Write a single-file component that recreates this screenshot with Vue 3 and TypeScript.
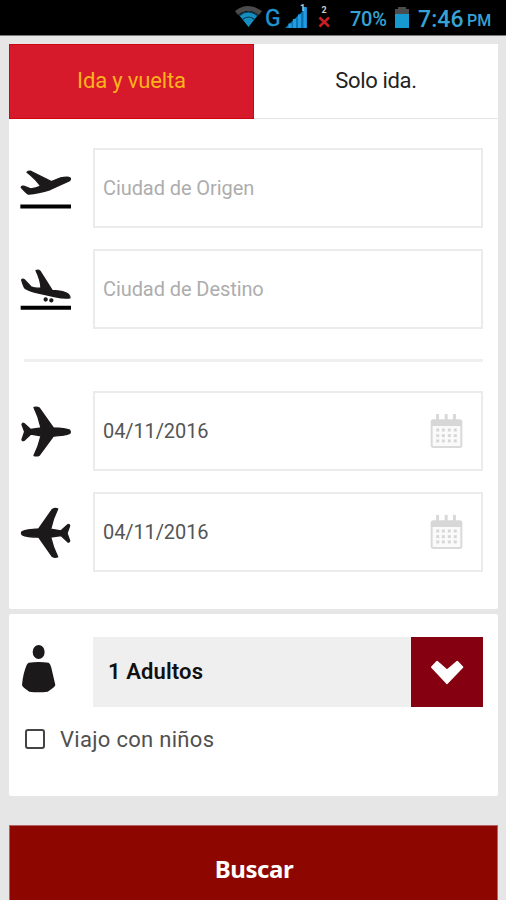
<script setup lang="ts">
import { ref } from 'vue'

interface Field {
  kind: 'takeoff' | 'landing' | 'depart' | 'return'
  text: string
}

const places: Field[] = [
  { kind: 'takeoff', text: 'Ciudad de Origen' },
  { kind: 'landing', text: 'Ciudad de Destino' },
]
const dates: Field[] = [
  { kind: 'depart', text: '04/11/2016' },
  { kind: 'return', text: '04/11/2016' },
]
const roundTrip = ref(true)
const children = ref(false)
const dots = [110, 127, 145, 163]
const dotRows = [130, 147, 163]
</script>

<template>
  <div class="screen">
    <header class="status">
      <svg class="signals" viewBox="0 0 104 36" aria-hidden="true">
        <path d="M1 11Q14 1 28 11L25 15Q14 7 4 15Z" fill="#4b4b4b" />
        <path d="M5 15Q14 8 24 15L14.500 27Z" fill="#168fc0" />
        <path d="M5.500 15.500Q14.500 8.500 23.500 15.500M8.500 19.500Q14.500 14.500 20.500 19.500" fill="none" stroke="#07334a" stroke-width="1.200" />
        <text x="31" y="25.500" class="network">G</text>
        <path d="M51 28L73 7V28Z" fill="#0872ae" />
        <path d="M56 28V23.500M60.500 28V19M65.500 28V14.500M71 28V7" stroke="#249be0" stroke-width="3.200" />
        <text x="66" y="11" class="sim">1</text>
        <text x="87.500" y="12.500" class="sim">2</text>
        <path d="M85.500 17.500L95 26.500M95 17.500L85.500 26.500" stroke="#c81f27" stroke-width="2.500" />
      </svg>
      <span class="percent">70%</span>
      <svg class="battery" viewBox="0 0 16 22" aria-hidden="true">
        <path d="M4 0H12V2H15V8H1V2H4Z" fill="#4c4c4c" />
        <path d="M1 7H15V21H1Z" fill="#1599cf" />
      </svg>
      <span class="clock">7:46</span>
      <span class="meridiem">PM</span>
    </header>

    <main>
      <section class="card trip">
        <nav class="tabs">
          <button :class="['tab', { active: roundTrip }]" @click="roundTrip = true"><span class="label-round">Ida y vuelta</span></button>
          <button :class="['tab', { active: !roundTrip }]" @click="roundTrip = false"><span class="label-one">Solo ida.</span></button>
        </nav>

        <div class="group">
          <div v-for="f in places" :key="f.kind" class="row">
            <svg v-if="f.kind === 'takeoff'" class="icon plane" viewBox="60 67.5 156 150">
              <path d="M81 95Q86 91 94 93L154 123L182 112Q205 107 211 113Q213 118 204 123L151 147Q115 158 86 161Q80 159 64 141Q64 136 71 137L92 145Q108 144 122 137Q108 116 81 95Z" />
              <path class="ground" d="M61 192H213V204H61Z" />
            </svg>
            <svg v-else class="icon plane" viewBox="60 70.5 156 150">
              <path d="M108 90Q115 87 120 92L157 150Q194 152 205 161Q211 168 210 172Q193 175 163 168L116 158Q87 152 76 144Q71 140 65 118Q68 114 73 118L93 139Q108 145 123 142Q122 119 108 90Z" />
              <circle cx="137" cy="177" r="4.500" /><circle cx="154" cy="179.500" r="4.500" />
              <path class="ground" d="M62 196H213V208H62Z" />
            </svg>
            <div class="field placeholder"><span :class="f.kind">{{ f.text }}</span></div>
          </div>
        </div>

        <div class="divider"></div>

        <div class="group">
          <div v-for="f in dates" :key="f.kind" class="row">
            <svg v-if="f.kind === 'depart'" class="icon plane" viewBox="60 61.5 156 150">
              <path d="M102 66Q111 63 118 68L160 127Q196 128 209 134Q213 139 209 144Q196 150 160 152L118 209Q111 213 102 210Q116 182 123 151L92 146L72 165Q67 167 66 162L74 139L66 117Q67 111 72 114L92 132L123 127Q116 94 102 66Z" />
            </svg>
            <svg v-else class="icon plane" viewBox="60 64.5 156 150">
              <path d="M173 70Q164 67 157 72L116 130Q79 132 67 138Q62 143 67 148Q79 154 116 155L157 213Q164 217 173 214Q159 186 152 155L183 150L203 169Q208 171 209 166L201 143L209 121Q208 115 203 118L183 136L152 131Q159 98 173 70Z" />
            </svg>
            <div class="field">
              <span class="date">{{ f.text }}</span>
              <svg class="calendar" viewBox="92 82 98 106" aria-hidden="true">
                <path d="M114 82V100M140 82V100M165 82V100" stroke="#d8d8d8" stroke-width="9" />
                <rect x="96" y="102" width="90" height="80" rx="5" fill="#fafafa" stroke="#dadada" stroke-width="6" />
                <path d="M94 104Q94 99 99 99H182Q188 99 188 104V118H94Z" fill="#d7d7d7" />
                <template v-for="y in dotRows" :key="y">
                  <rect v-for="x in dots" :key="x" :x="x" :y="y - 4" width="9" height="9" fill="#d7d7d7" />
                </template>
              </svg>
            </div>
          </div>
        </div>
      </section>

      <section class="card people">
        <div class="row passengers">
          <svg class="icon" viewBox="60 156 156 150">
            <ellipse cx="116" cy="171" rx="18" ry="21" />
            <path d="M86 203Q116 199 146 203Q151 206 154 218L166 270Q165 276 143 290Q116 293 88 290Q67 276 66 270Q69 235 80 210Q82 205 86 203Z" />
          </svg>
          <button class="select">
            <span class="count">1 Adultos</span>
            <span class="arrow">
              <svg viewBox="120 189.5 102 84" aria-hidden="true"><path d="M126 217L141 201L171 227L202 201L217 217L171 265Z" /></svg>
            </span>
          </button>
        </div>
        <label class="check">
          <input v-model="children" type="checkbox">
          <span>Viajo con niños</span>
        </label>
      </section>

      <button class="search"><span>Buscar</span></button>
    </main>
  </div>
</template>

<style>
body {
  margin: 0;
  background: #e6e6e6;
}
</style>

<style scoped>
.screen {
  width: 506px;
  height: 900px;
  overflow: hidden;
  background: #e6e6e6;
  font-family: Roboto, "Liberation Sans", sans-serif;
  color: #222;
}
.screen *,
.screen {
  box-sizing: border-box;
}
button {
  border: 0;
  padding: 0;
  font: inherit;
  color: inherit;
  border-radius: 0;
}
.status {
  display: flex;
  align-items: center;
  height: 36px;
  padding: 0 0 0 234px;
  background: #000;
  border-bottom: 1px solid #777;
  color: #36a3d4;
  white-space: nowrap;
}
.signals {
  flex: none;
  width: 104px;
  height: 36px;
}
.network {
  font-size: 23px;
  fill: #2196d3;
  stroke: #2196d3;
  stroke-width: 0.4px;
}
.sim {
  font-size: 9px;
  font-weight: bold;
  fill: #ccc;
}
.percent {
  width: 40px;
  margin-left: 12px;
  padding-top: 3px;
  font-size: 20px;
  font-weight: 500;
  letter-spacing: -0.3px;
}
.battery {
  flex: none;
  width: 16px;
  height: 22px;
  margin-left: 4px;
}
.clock {
  width: 46px;
  margin-left: 8px;
  padding-top: 3px;
  font-size: 23px;
  font-weight: 500;
  letter-spacing: 0.1px;
}
.meridiem {
  margin-left: 3px;
  padding-top: 6px;
  font-size: 16px;
  font-weight: 500;
}
main {
  display: flex;
  flex-direction: column;
  padding: 8px 8px 0 9px;
}
.card {
  background: #fff;
  border-radius: 2px;
}
.trip {
  height: 565px;
}
.tabs {
  display: grid;
  grid-template-columns: 245px 1fr;
  height: 75px;
}
.tab {
  padding-bottom: 2px;
  background: #fff;
  border-bottom: 1px solid #e5e5e5;
  font-size: 22px;
}
.tab.active {
  background: #d7192c;
  border: 1px solid #cf0610;
  color: #fdb31b;
}
.label-round {
  letter-spacing: -0.15px;
}
.label-one {
  letter-spacing: -0.35px;
}
.group {
  display: flex;
  flex-direction: column;
  gap: 21px;
  padding: 29px 15px 0 11px;
}
.row {
  display: flex;
  align-items: center;
  height: 80px;
}
.icon {
  flex: none;
  width: 52px;
  height: 50px;
  margin-right: 21px;
  overflow: visible;
  fill: #1c191a;
}
.plane {
  stroke: #1c191a;
  stroke-width: 4;
  stroke-linejoin: round;
}
.ground {
  fill: #000;
  stroke: none;
}
.field {
  display: flex;
  flex: 1;
  align-items: center;
  justify-content: space-between;
  height: 80px;
  padding: 0 18px 0 8px;
  border: 2px solid #ebebeb;
  font-size: 20px;
  color: #555;
}
.placeholder {
  color: #adadad;
}
.takeoff,
.landing {
  letter-spacing: -0.08px;
}
.calendar {
  width: 33px;
  height: 35px;
}
.date {
  letter-spacing: -0.1px;
}
.divider {
  height: 3px;
  margin: 30px 15px 0;
  background: #efefef;
}
.people {
  height: 182px;
  margin-top: 5px;
  padding: 23px 15px 0 11px;
}
.passengers {
  height: 70px;
}
.select {
  display: flex;
  flex: 1;
  align-items: center;
  justify-content: space-between;
  height: 70px;
  padding-left: 15px;
  background: #efefef;
  color: #111;
  font-size: 22px;
  font-weight: 600;
}
.count {
  padding-bottom: 1px;
  letter-spacing: 0.12px;
}
.arrow {
  display: grid;
  place-items: center;
  width: 72px;
  height: 70px;
  background: #850010;
}
.arrow svg {
  width: 34px;
  height: 28px;
  fill: #fff;
  stroke: #fff;
  stroke-width: 6;
  stroke-linejoin: round;
}
.check {
  display: flex;
  align-items: center;
  height: 64px;
  padding-left: 5px;
  font-size: 22px;
  letter-spacing: 0.3px;
  color: #505050;
}
.check input {
  appearance: none;
  width: 20px;
  height: 20px;
  margin: 0 15px 0 0;
  border: 2px solid #444;
  border-radius: 3px;
}
.search {
  height: 80px;
  margin-top: 29px;
  padding: 7px 0 0 1px;
  background: #8e0600;
  border: 1px solid #b66262;
  color: #fff;
  font-family: "Noto Sans", sans-serif;
  font-size: 24px;
  font-weight: 700;
  letter-spacing: -0.4px;
}
</style>
